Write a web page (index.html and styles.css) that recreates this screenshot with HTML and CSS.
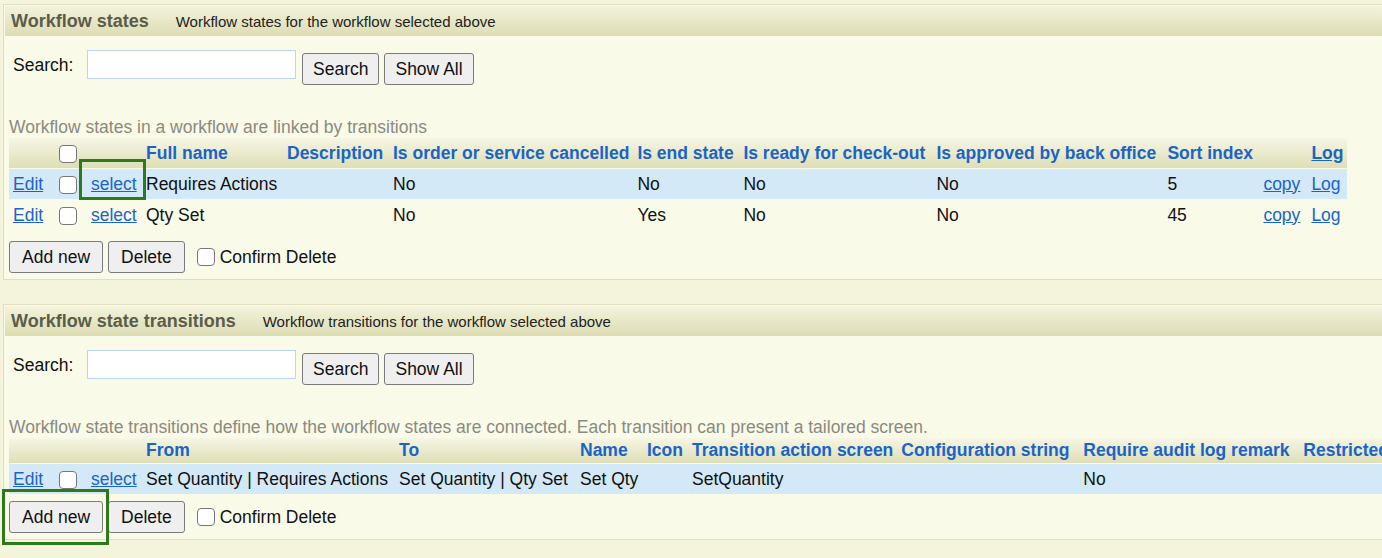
FILE: index.html
```html
<!DOCTYPE html>
<html lang="en">
<head>
  <meta charset="UTF-8">
  <title>Workflow states</title>
  <link rel="stylesheet" href="styles.css">
</head>
<body>
  <div class="panel">
    <div class="panel-head">
      <h2 class="title">Workflow states</h2>
      <span class="subtitle">Workflow states for the workflow selected above</span>
    </div>
    <div class="panel-body">
      <div class="search-row">
        <label class="search-label">Search:</label>
        <input type="text" class="search-input">
        <button>Search</button>
        <button>Show All</button>
      </div>
      <p class="hint">Workflow states in a workflow are linked by transitions</p>
      <table class="grid states">
        <colgroup>
          <col style="width:45px"><col style="width:33px"><col style="width:55px">
          <col style="width:141px"><col style="width:106px"><col style="width:241px">
          <col style="width:106px"><col style="width:193px"><col style="width:231px">
          <col style="width:96px"><col style="width:48px"><col style="width:40px">
        </colgroup>
        <tr class="head">
          <th></th>
          <th class="chk"><input type="checkbox"></th>
          <th></th>
          <th>Full name</th>
          <th>Description</th>
          <th>Is order or service cancelled</th>
          <th>Is end state</th>
          <th>Is ready for check-out</th>
          <th>Is approved by back office</th>
          <th>Sort index</th>
          <th></th>
          <th><a href="#">Log</a></th>
        </tr>
        <tr class="picked">
          <td><a href="#">Edit</a></td>
          <td class="chk"><input type="checkbox"></td>
          <td><a href="#">select</a></td>
          <td>Requires Actions</td>
          <td></td>
          <td>No</td>
          <td>No</td>
          <td>No</td>
          <td>No</td>
          <td>5</td>
          <td><a href="#">copy</a></td>
          <td><a href="#">Log</a></td>
        </tr>
        <tr>
          <td><a href="#">Edit</a></td>
          <td class="chk"><input type="checkbox"></td>
          <td><a href="#">select</a></td>
          <td>Qty Set</td>
          <td></td>
          <td>No</td>
          <td>Yes</td>
          <td>No</td>
          <td>No</td>
          <td>45</td>
          <td><a href="#">copy</a></td>
          <td><a href="#">Log</a></td>
        </tr>
      </table>
      <div class="actions">
        <button>Add new</button>
        <button>Delete</button>
        <label class="confirm"><input type="checkbox"> Confirm Delete</label>
      </div>
    </div>
  </div>

  <div class="panel">
    <div class="panel-head">
      <h2 class="title">Workflow state transitions</h2>
      <span class="subtitle">Workflow transitions for the workflow selected above</span>
    </div>
    <div class="panel-body">
      <div class="search-row">
        <label class="search-label">Search:</label>
        <input type="text" class="search-input">
        <button>Search</button>
        <button>Show All</button>
      </div>
      <p class="hint">Workflow state transitions define how the workflow states are connected. Each transition can present a tailored screen.</p>
      <table class="grid transitions">
        <colgroup>
          <col style="width:45px"><col style="width:33px"><col style="width:55px">
          <col style="width:253px"><col style="width:181px"><col style="width:67px">
          <col style="width:45px"><col style="width:205px"><col style="width:182px">
          <col style="width:220px"><col style="width:120px">
        </colgroup>
        <tr class="head">
          <th></th>
          <th></th>
          <th></th>
          <th>From</th>
          <th>To</th>
          <th>Name</th>
          <th>Icon</th>
          <th>Transition action screen</th>
          <th>Configuration string</th>
          <th>Require audit log remark</th>
          <th>Restricted</th>
        </tr>
        <tr class="picked">
          <td><a href="#">Edit</a></td>
          <td class="chk"><input type="checkbox"></td>
          <td><a href="#">select</a></td>
          <td>Set Quantity | Requires Actions</td>
          <td>Set Quantity | Qty Set</td>
          <td>Set Qty</td>
          <td></td>
          <td>SetQuantity</td>
          <td></td>
          <td>No</td>
          <td></td>
        </tr>
      </table>
      <div class="actions">
        <button>Add new</button>
        <button>Delete</button>
        <label class="confirm"><input type="checkbox"> Confirm Delete</label>
      </div>
    </div>
  </div>

  <div class="mark mark-select"></div>
  <div class="mark mark-add"></div>
</body>
</html>
```

FILE: styles.css
```css
html {
  overflow: hidden;
}

body {
  margin: 0;
  padding: 4px 0 0 3px;
  font-family: "Liberation Sans", Arial, sans-serif;
  font-size: 17.5px;
  color: #111;
  background: #f4f4dc;
}

a {
  color: #1a64c8;
}

.panel {
  width: 1500px;
  background: #fafae9;
  border: 1px solid #dfdfc0;
  padding: 1px;
  margin-bottom: 24px;
}

.panel-head {
  height: 30px;
  display: flex;
  align-items: center;
  padding-left: 6px;
  background: linear-gradient(#f3f3de, #dcdcb2);
}

.title {
  margin: 0;
  font-size: 18px;
  font-weight: bold;
  color: #5c5c4a;
}

.subtitle {
  margin-left: 27px;
  font-size: 15px;
  color: #222;
}

.panel-body {
  padding: 0 4px;
}

.search-row {
  display: flex;
  align-items: flex-start;
  margin-top: 14px;
  height: 35px;
}

.search-label {
  width: 74px;
  padding: 5px 0 0 4px;
}

.search-input {
  width: 205px;
  height: 25px;
  margin: 0 6px 0 0;
  border: 1px solid #bcd4f4;
  background: #fff;
  padding: 1px;
}

button {
  font-family: inherit;
  font-size: 17.5px;
  height: 32px;
  margin: 3px 5px 0 0;
  padding: 0 10px;
  color: #111;
  background: #efefef;
  border: 1px solid #7a7a7a;
  border-radius: 3px;
}

.hint {
  margin: 32px 0 0;
  color: #8a8a80;
  line-height: 20px;
}

.grid {
  border-collapse: separate;
  border-spacing: 0 1px;
  table-layout: fixed;
}

.grid th,
.grid td {
  padding: 0 4px;
  text-align: left;
  white-space: nowrap;
}

.grid th {
  font-weight: bold;
  color: #1a64c8;
}

.grid .head {
  height: 30px;
  background: linear-gradient(#f6f6e4, #dedeb6);
}

.transitions .head {
  height: 25px;
}

.grid td {
  height: 30px;
}

.grid .picked {
  background: #d4e9f7;
}

.grid .chk {
  padding: 0 5px 0 0;
  text-align: center;
}

input[type="checkbox"] {
  appearance: none;
  width: 18px;
  height: 18px;
  margin: 0;
  vertical-align: middle;
  background: #fff;
  border: 1px solid #777;
  border-radius: 4px;
}

.actions {
  display: flex;
  align-items: center;
  margin-top: 10px;
  padding-bottom: 5px;
}

.transitions + .actions {
  margin-top: 6px;
}

.actions button {
  margin-top: 0;
  padding: 0 12px;
}

.confirm {
  display: flex;
  align-items: center;
  gap: 5px;
  margin-left: 7px;
}

.mark {
  position: absolute;
  border: 3px solid #2c7a1c;
}

.mark-select {
  left: 79px;
  top: 159px;
  width: 61px;
  height: 35px;
}

.mark-add {
  left: 2px;
  top: 489px;
  width: 101px;
  height: 50px;
}
```
